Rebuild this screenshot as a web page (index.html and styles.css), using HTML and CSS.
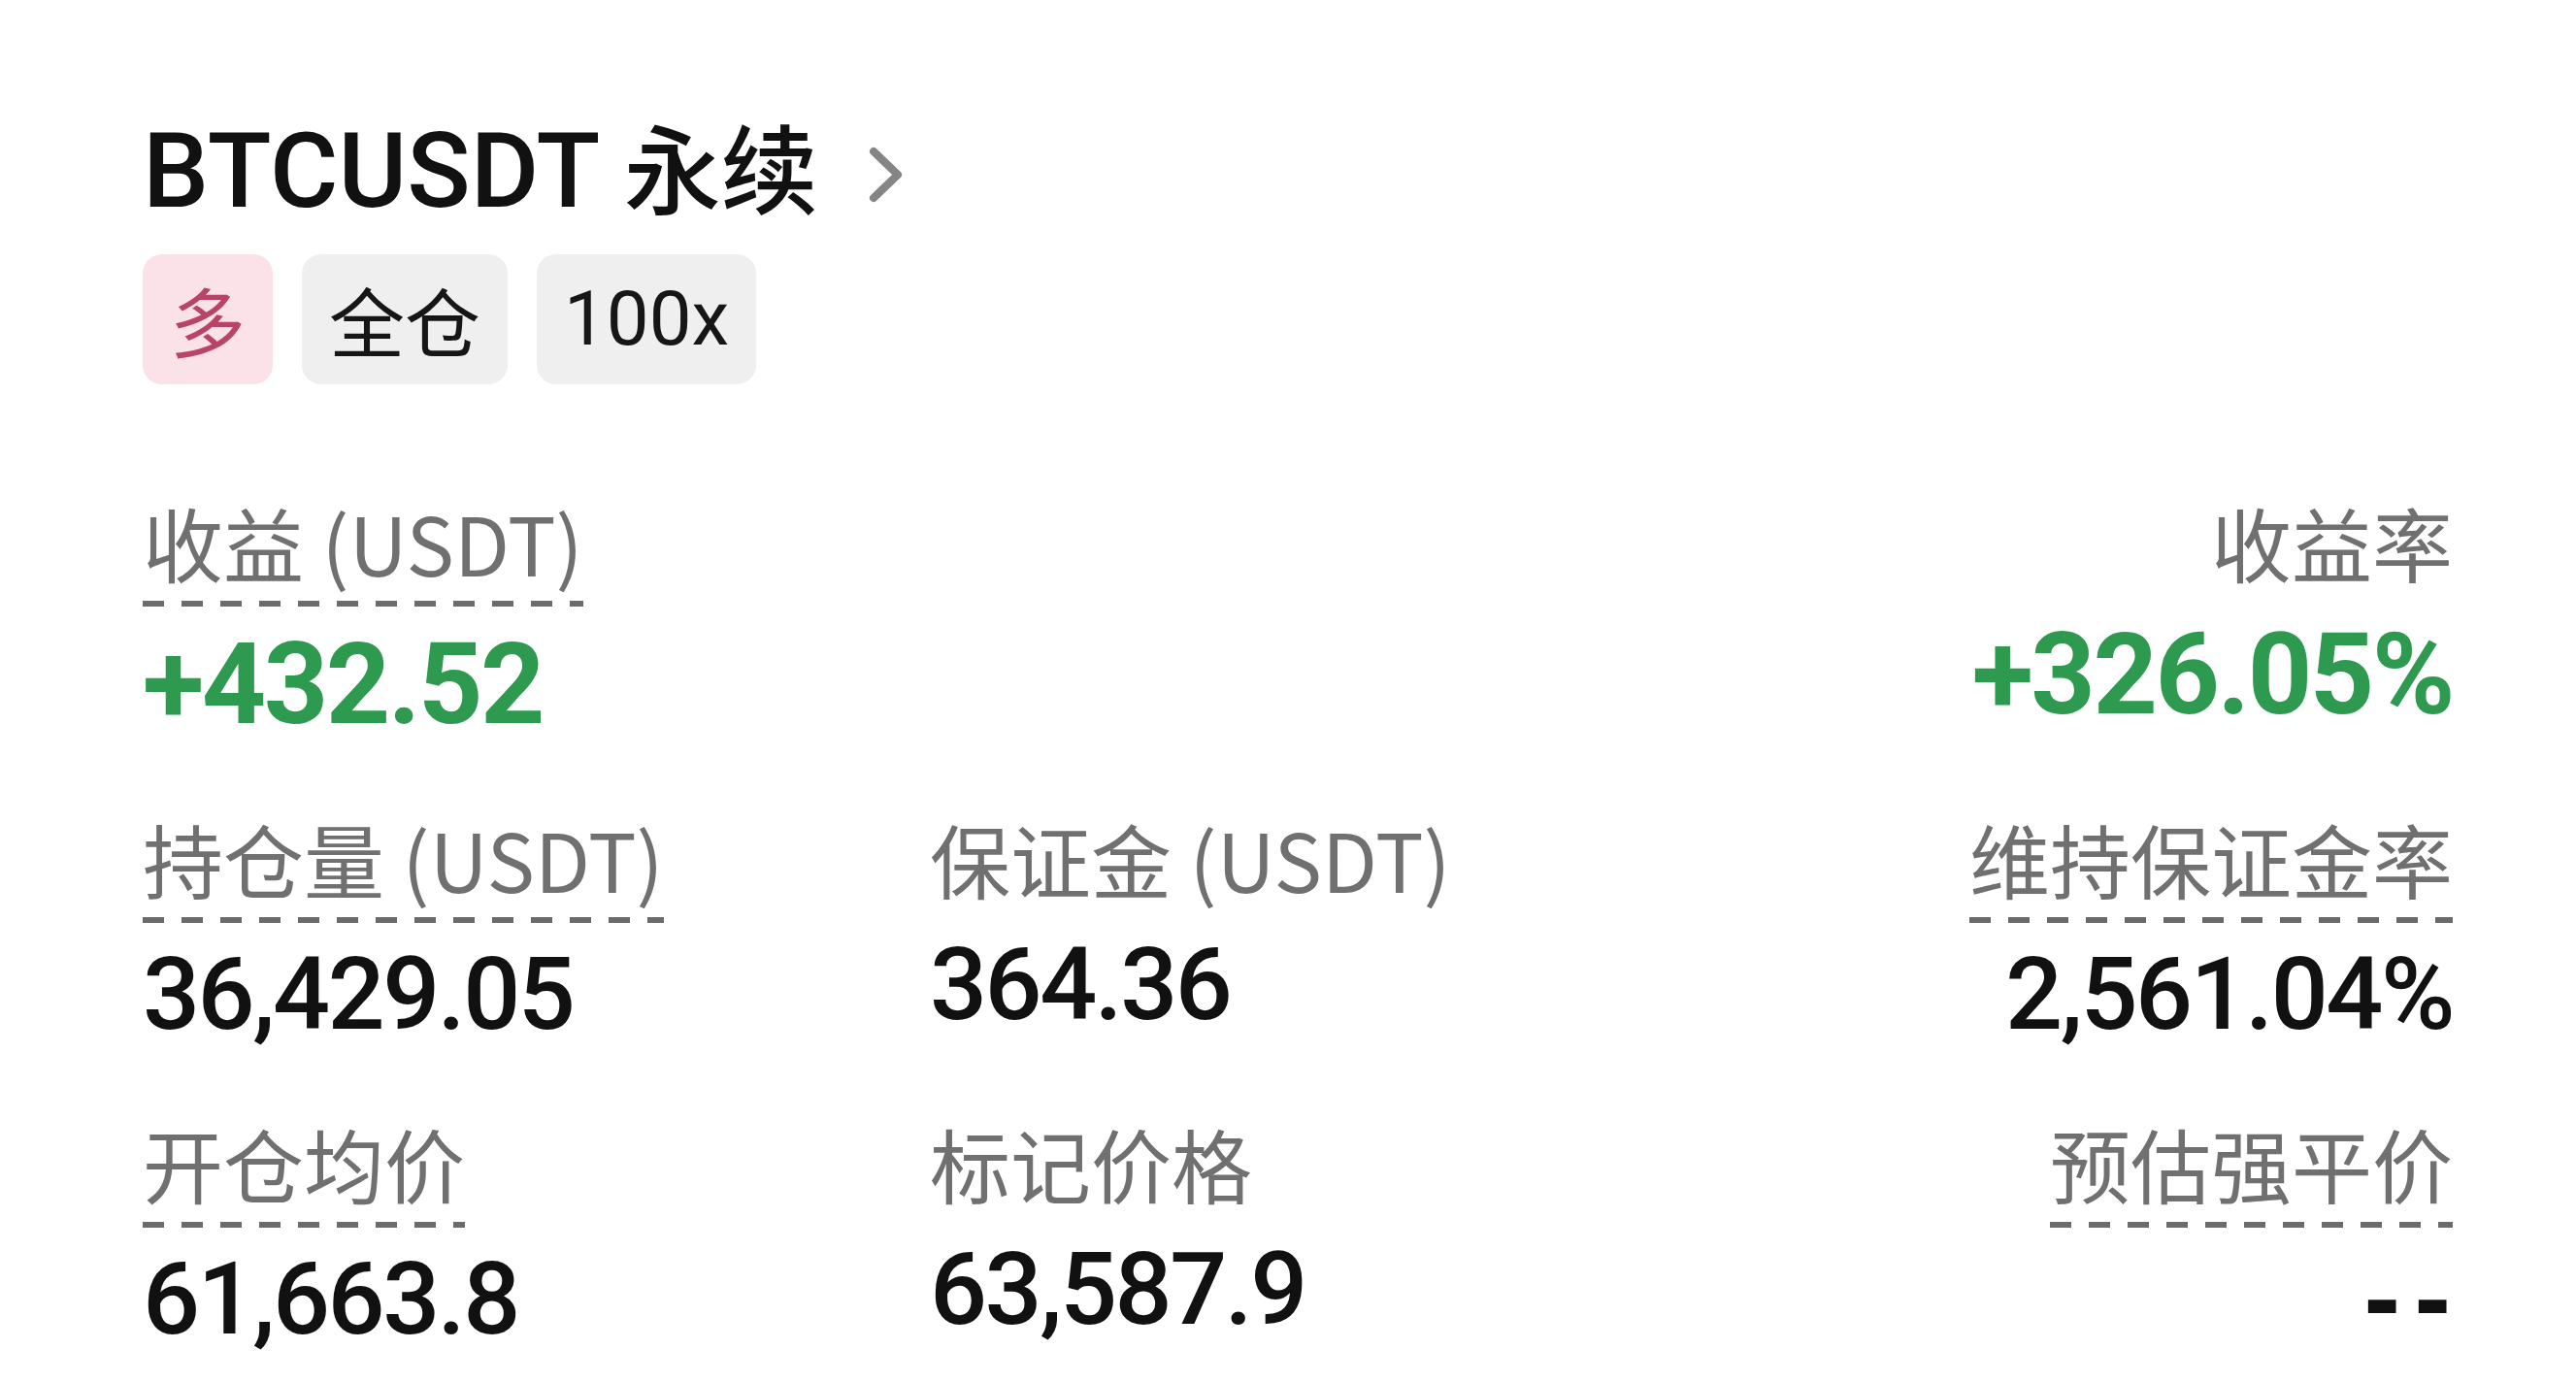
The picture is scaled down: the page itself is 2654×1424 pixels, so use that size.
FILE: index.html
```html
<!DOCTYPE html>
<html lang="zh-CN">
<head>
<meta charset="utf-8">
<title>BTCUSDT 永续</title>
<link rel="stylesheet" href="styles.css">
</head>
<body>
<main class="position">
  <header class="symbol">
    <h1 class="symbol-name">BTCUSDT <span class="symbol-kind">永续</span></h1>
    <svg class="chevron" viewBox="0 0 36 58" width="36" height="58" aria-hidden="true">
      <polyline points="5,5 30,29 5,53" fill="none" stroke="currentColor" stroke-width="8" stroke-linecap="round" stroke-linejoin="round"/>
    </svg>
  </header>

  <div class="tags">
    <span class="tag tag-long">多</span>
    <span class="tag">全仓</span>
    <span class="tag">100x</span>
  </div>

  <section class="stats">
    <div class="stat">
      <span class="label dotted">收益 (USDT)</span>
      <span class="value big up">+432.52</span>
    </div>
    <div class="stat end col-3">
      <span class="label">收益率</span>
      <span class="value big up">+326.05%</span>
    </div>

    <div class="stat">
      <span class="label dotted">持仓量 (USDT)</span>
      <span class="value">36,429.05</span>
    </div>
    <div class="stat">
      <span class="label">保证金 (USDT)</span>
      <span class="value">364.36</span>
    </div>
    <div class="stat end">
      <span class="label dotted">维持保证金率</span>
      <span class="value">2,561.04%</span>
    </div>

    <div class="stat">
      <span class="label dotted">开仓均价</span>
      <span class="value">61,663.8</span>
    </div>
    <div class="stat">
      <span class="label">标记价格</span>
      <span class="value">63,587.9</span>
    </div>
    <div class="stat end">
      <span class="label dotted">预估强平价</span>
      <span class="value"><span class="empty">--</span></span>
    </div>
  </section>
</main>
</body>
</html>
```

FILE: styles.css
```css
html, body {
  margin: 0;
  background: #ffffff;
}

body {
  font-family: Roboto, "Noto Sans CJK SC", sans-serif;
  color: #111111;
}

.position {
  padding: 112px 127px 0 147px;
}

/* symbol title with chevron */
.symbol {
  display: flex;
  align-items: center;
  gap: 52px;
}

.symbol-name {
  margin: 0;
  font-size: 108px;
  font-weight: 500;
  line-height: 1.2;
  letter-spacing: 0;
}

.symbol-kind {
  font-size: 100px;
}

.chevron {
  color: #858585;
  margin-top: 6px;
}

/* side / margin mode / leverage chips */
.tags {
  display: flex;
  gap: 30px;
  margin-top: 20px;
}

.tag {
  display: inline-flex;
  align-items: center;
  justify-content: center;
  height: 134px;
  padding: 0 28px;
  border-radius: 20px;
  background: #efefef;
  font-size: 78px;
  color: #161616;
}

.tag-long {
  background: #fbe1e8;
  color: #b84468;
}

/* stat grid */
.stats {
  display: grid;
  grid-template-columns: 811px 1fr 1fr;
  row-gap: 78px;
  margin-top: 119px;
}

.stat {
  display: flex;
  flex-direction: column;
  align-items: flex-start;
}

.stat.end {
  align-items: flex-end;
  grid-column: 3;
}

.label {
  font-size: 83px;
  line-height: 1.05;
  color: #707070;
  font-family: "Noto Sans CJK SC", sans-serif;
  padding-bottom: 13px;
}

.label.dotted {
  padding-bottom: 23px;
  background-image: repeating-linear-gradient(90deg, #6b6b6b 0 22px, transparent 22px 40px);
  background-size: 100% 6px;
  background-position: left bottom;
  background-repeat: no-repeat;
}

.value {
  margin-top: 22px;
  font-size: 104px;
  font-weight: 500;
  line-height: 1;
  letter-spacing: -2.5px;
  color: #111111;
}

.value.big {
  font-size: 116px;
  font-weight: 700;
}

.value.up {
  color: #2e9a4f;
}

/* placeholder shown when there is no liquidation price */
.empty {
  display: inline-block;
  font-weight: 700;
  letter-spacing: 11px;
  margin-right: -11px;
  transform: translateY(3px) scaleY(1.2);
  transform-origin: right center;
}
```
